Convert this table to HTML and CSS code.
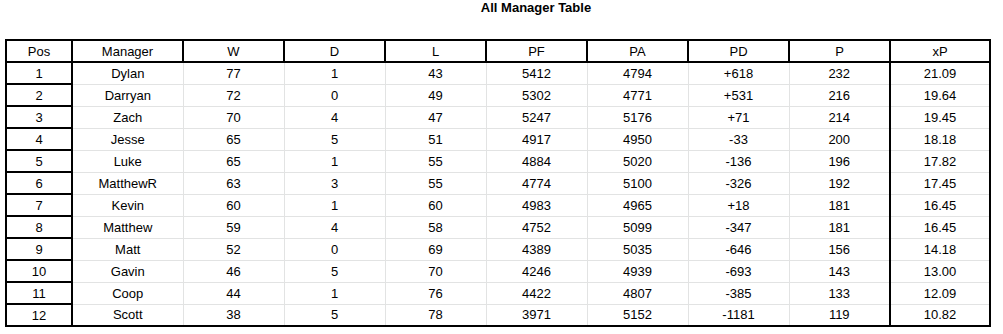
FILE: index.html
```html
<!DOCTYPE html>
<html lang="en">
<head>
    <meta charset="UTF-8">
    <meta name="viewport" content="width=device-width, initial-scale=1.0">
    <title>All Manager Table</title>
    <link rel="stylesheet" href="styles.css">
</head>
<body>
    <div class="chart">
        <h1 class="chart-title">All Manager Table</h1>

        <table class="standings">
            <colgroup>
                <col class="col-pos">
                <col class="col-manager">
                <col class="col-stat">
                <col class="col-stat">
                <col class="col-stat">
                <col class="col-stat">
                <col class="col-stat">
                <col class="col-stat">
                <col class="col-stat">
                <col class="col-xp">
            </colgroup>
            <thead>
                <tr>
                    <th>Pos</th>
                    <th>Manager</th>
                    <th>W</th>
                    <th>D</th>
                    <th>L</th>
                    <th>PF</th>
                    <th>PA</th>
                    <th>PD</th>
                    <th>P</th>
                    <th>xP</th>
                </tr>
            </thead>
            <tbody id="standings-body">
                <tr><td class="pos">1</td><td>Dylan</td><td>77</td><td>1</td><td>43</td><td>5412</td><td>4794</td><td>+618</td><td>232</td><td class="xp">21.09</td></tr>
                <tr><td class="pos">2</td><td>Darryan</td><td>72</td><td>0</td><td>49</td><td>5302</td><td>4771</td><td>+531</td><td>216</td><td class="xp">19.64</td></tr>
                <tr><td class="pos">3</td><td>Zach</td><td>70</td><td>4</td><td>47</td><td>5247</td><td>5176</td><td>+71</td><td>214</td><td class="xp">19.45</td></tr>
                <tr><td class="pos">4</td><td>Jesse</td><td>65</td><td>5</td><td>51</td><td>4917</td><td>4950</td><td>-33</td><td>200</td><td class="xp">18.18</td></tr>
                <tr><td class="pos">5</td><td>Luke</td><td>65</td><td>1</td><td>55</td><td>4884</td><td>5020</td><td>-136</td><td>196</td><td class="xp">17.82</td></tr>
                <tr><td class="pos">6</td><td>MatthewR</td><td>63</td><td>3</td><td>55</td><td>4774</td><td>5100</td><td>-326</td><td>192</td><td class="xp">17.45</td></tr>
                <tr><td class="pos">7</td><td>Kevin</td><td>60</td><td>1</td><td>60</td><td>4983</td><td>4965</td><td>+18</td><td>181</td><td class="xp">16.45</td></tr>
                <tr><td class="pos">8</td><td>Matthew</td><td>59</td><td>4</td><td>58</td><td>4752</td><td>5099</td><td>-347</td><td>181</td><td class="xp">16.45</td></tr>
                <tr><td class="pos">9</td><td>Matt</td><td>52</td><td>0</td><td>69</td><td>4389</td><td>5035</td><td>-646</td><td>156</td><td class="xp">14.18</td></tr>
                <tr><td class="pos">10</td><td>Gavin</td><td>46</td><td>5</td><td>70</td><td>4246</td><td>4939</td><td>-693</td><td>143</td><td class="xp">13.00</td></tr>
                <tr><td class="pos">11</td><td>Coop</td><td>44</td><td>1</td><td>76</td><td>4422</td><td>4807</td><td>-385</td><td>133</td><td class="xp">12.09</td></tr>
                <tr><td class="pos">12</td><td>Scott</td><td>38</td><td>5</td><td>78</td><td>3971</td><td>5152</td><td>-1181</td><td>119</td><td class="xp">10.82</td></tr>
            </tbody>
        </table>
    </div>
</body>
</html>
```

FILE: styles.css
```css
/* Base */
* {
    margin: 0;
    padding: 0;
    box-sizing: border-box;
}

body {
    font-family: 'Liberation Sans', Arial, sans-serif;
    color: #000;
    background-color: #fff;
}

/* Chart wrapper */
.chart {
    padding: 0 0 0 5px;
}

.chart-title {
    font-size: 13px;
    font-weight: bold;
    line-height: 16px;
    height: 16px;
    margin-bottom: 23px;
    padding-left: 64px;
    text-align: center;
}

/* Table */
.standings {
    border-collapse: collapse;
    table-layout: fixed;
    width: 986px;
    border: 2px solid #000;
    font-size: 13px;
}

.col-pos {
    width: 66px;
}

.col-manager {
    width: 111px;
}

.col-stat {
    width: 101px;
}

.col-xp {
    width: 100px;
}

.standings th,
.standings td {
    height: 22px;
    padding: 0;
    text-align: center;
    vertical-align: middle;
    font-weight: normal;
    white-space: nowrap;
}

.standings th {
    border: 2px solid #000;
}

.standings td {
    border: 1px solid #e2e3e3;
}

/* Highlighted columns */
.standings td.pos {
    border: 2px solid #000;
}

.standings td.xp {
    border-left: 2px solid #000;
    border-right: 2px solid #000;
}
```
